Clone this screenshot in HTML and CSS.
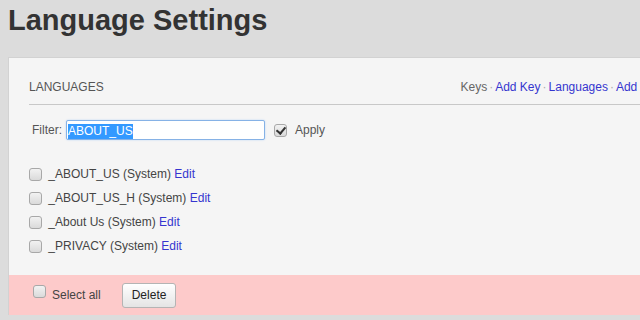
FILE: index.html
```html
<!DOCTYPE html>
<html lang="en">
<head>
  <meta charset="UTF-8">
  <meta name="viewport" content="width=device-width, initial-scale=1.0">
  <title>Language Settings</title>
  <link rel="stylesheet" href="styles.css">
</head>
<body>
  <div class="page">
    <h1 class="page-title">Language Settings</h1>

    <div class="panel">
      <div class="panel-body">
        <div class="panel-head">
          <span class="panel-title">LANGUAGES</span>
          <div class="panel-links">
            <span class="current">Keys</span><span class="sep">&middot;</span><a href="#">Add Key</a><span class="sep">&middot;</span><a href="#">Languages</a><span class="sep">&middot;</span><a href="#">Add Language</a>
          </div>
        </div>

        <div class="filter">
          <label class="filter-label">Filter:</label>
          <div class="filter-input"><span class="selected">ABOUT_US</span></div>
          <input type="checkbox" class="cb cb-apply" checked>
          <span class="filter-apply">Apply</span>
        </div>

        <ul class="key-list">
          <li><input type="checkbox" class="cb"> _ABOUT_US (System) <a href="#">Edit</a></li>
          <li><input type="checkbox" class="cb"> _ABOUT_US_H (System) <a href="#">Edit</a></li>
          <li><input type="checkbox" class="cb"> _About Us (System) <a href="#">Edit</a></li>
          <li><input type="checkbox" class="cb"> _PRIVACY (System) <a href="#">Edit</a></li>
        </ul>
      </div>

      <div class="panel-foot">
        <input type="checkbox" class="cb cb-all">
        <span class="select-all">Select all</span>
        <button class="btn">Delete</button>
      </div>
    </div>
  </div>
</body>
</html>
```

FILE: styles.css
```css
html, body { margin: 0; overflow: hidden; }
body { background: #dcdcdc; font-family: "Liberation Sans", Arial, sans-serif; font-size: 12px; color: #444; }
a { color: #3535cf; text-decoration: none; }

.page { padding: 0 8px; }
.page-title { margin: 4px 0 0; font-size: 29px; line-height: 33px; font-weight: bold; color: #333; }

.panel { margin-top: 20px; width: 708px; background: #f5f5f5; border: 1px solid #d2d2d2; border-bottom: none; box-sizing: border-box; }
.panel-body { padding: 21px 21px 17px 20px; }

.panel-head { display: flex; justify-content: space-between; line-height: 16px; padding-bottom: 9px; border-bottom: 1px solid #c8c8c8; }
.panel-title { color: #555; }
.panel-links { white-space: nowrap; }
.panel-links .current { color: #666; }
.panel-links .sep { color: #aaa; padding: 0 2px; }

.filter { display: flex; align-items: center; margin-top: 15px; padding-left: 3px; color: #555; }
.filter-label { margin-right: 4px; }
.filter-input { width: 199px; height: 20px; box-sizing: border-box; padding: 3px 1px 0; background: #fff; border: 1px solid #86b2e6; border-radius: 2px; box-shadow: 0 0 2px #b8d4f5; }
.filter-input .selected { display: inline-block; line-height: 15px; background: #3399ff; color: #fff; }
.filter-apply { margin-left: 8px; }

.cb { appearance: none; -webkit-appearance: none; width: 13px; height: 13px; margin: 0; border: 1px solid #a8a8a8; border-radius: 3px; background: linear-gradient(#f2f2f2, #dadada); box-sizing: border-box; position: relative; flex: none; }
.cb:checked::after { content: ""; position: absolute; left: 3px; top: 0px; width: 4px; height: 7px; border: solid #333; border-width: 0 2px 2px 0; transform: rotate(40deg); }
.cb-apply { margin-left: 9px; }

.key-list { list-style: none; margin: 22px 0 0; padding: 0; color: #444; }
.key-list li { display: flex; align-items: center; height: 24px; white-space: pre; }
.key-list .cb { margin: 0 3px 0 0; }

.panel-foot { display: flex; align-items: center; height: 40px; padding-left: 24px; background: #fdcaca; color: #444; }
.cb-all { margin-bottom: 7px; }
.select-all { margin-left: 6px; }
.btn { margin-left: 21px; height: 25px; padding: 0 9px; font-family: inherit; font-size: 12px; color: #222; background: linear-gradient(#ffffff, #e4e4e4); border: 1px solid #b4b4b4; border-radius: 3px; cursor: pointer; }
```
